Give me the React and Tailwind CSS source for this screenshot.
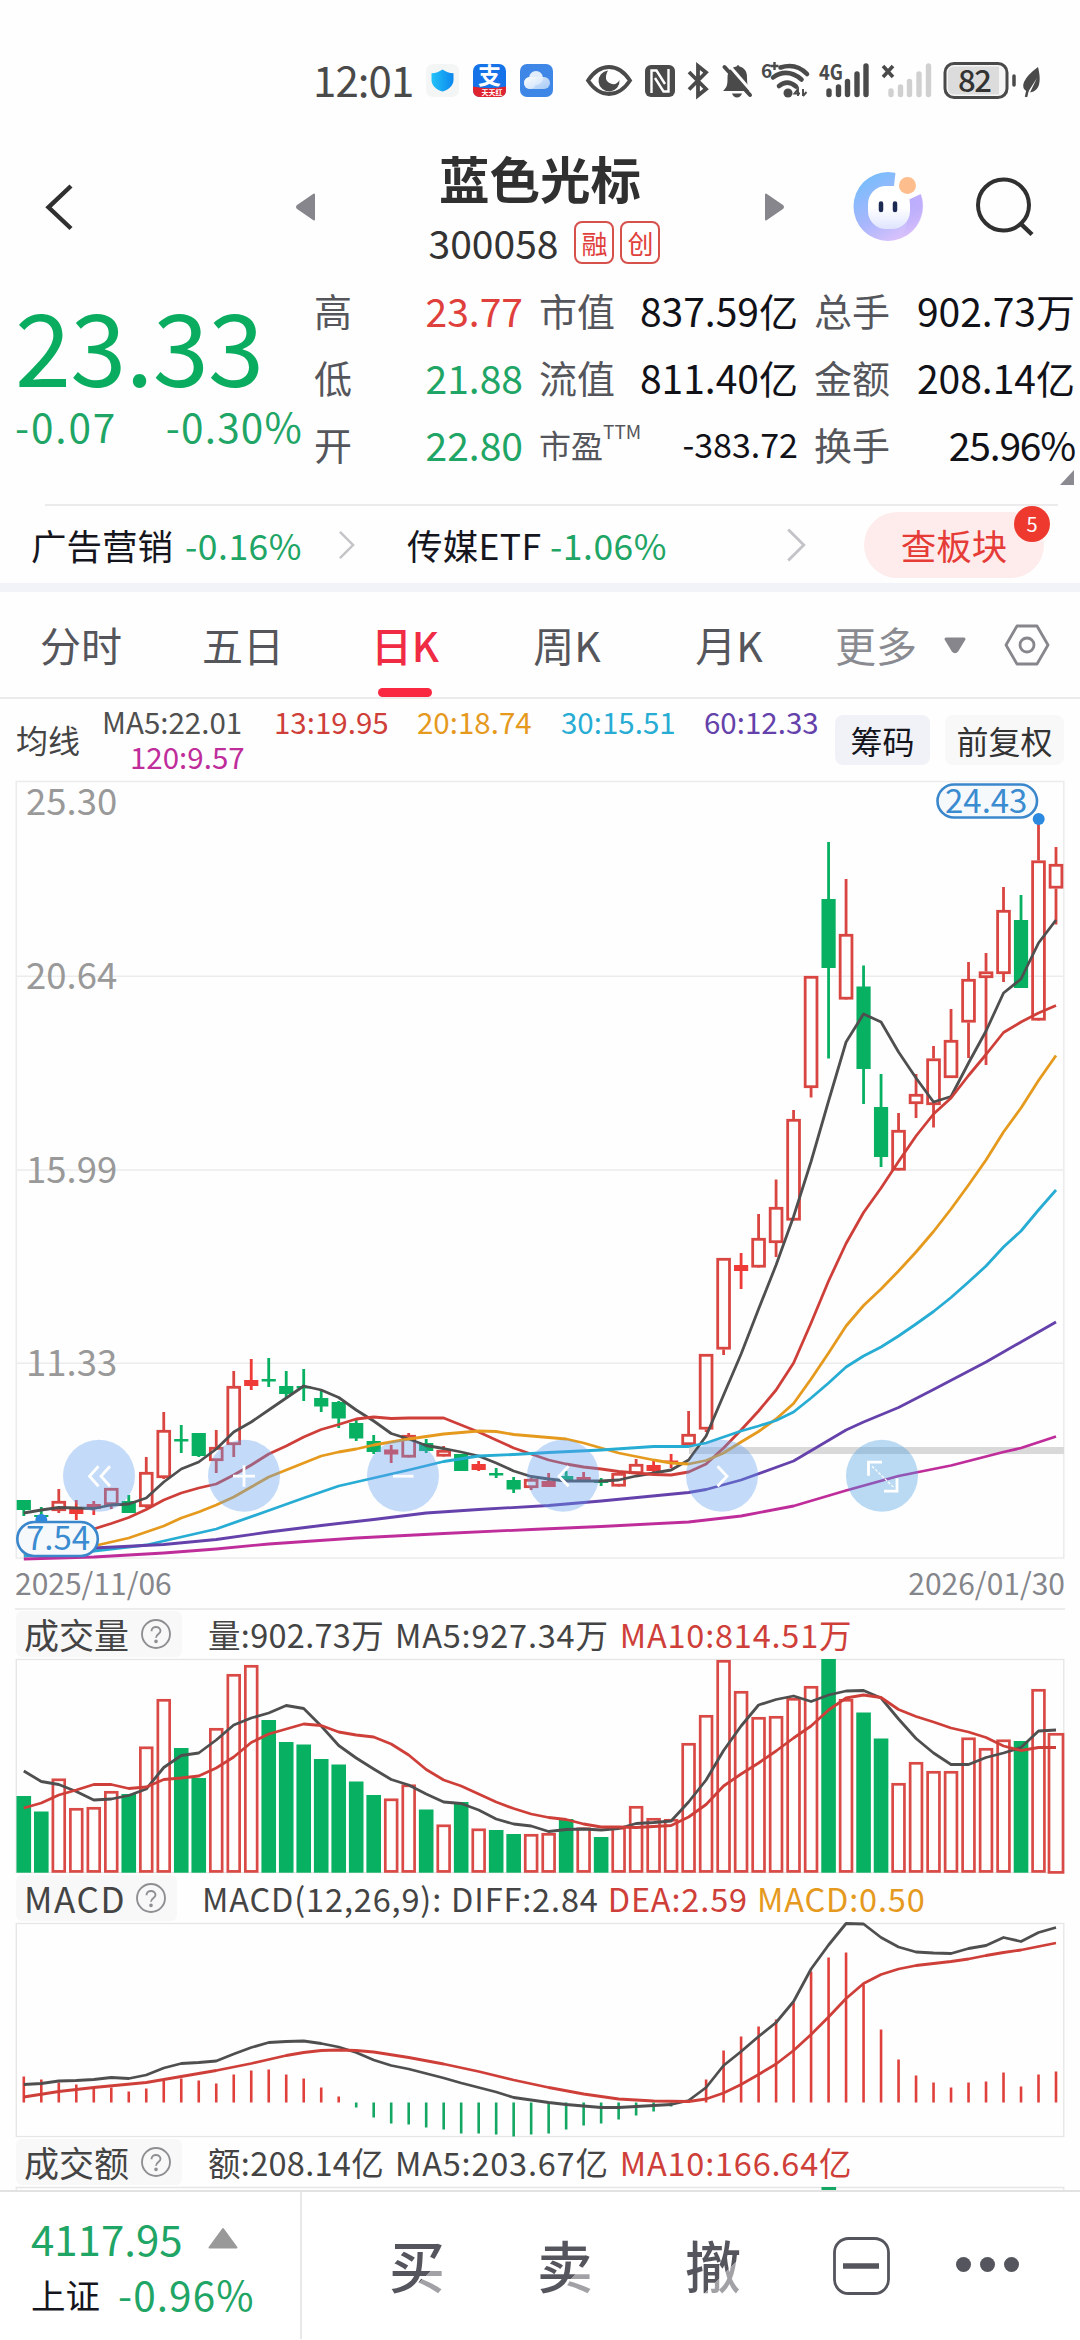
import React from 'react';

// One entry per trading day: [up, open/close top, open/close bottom, high, low], in chart units
const candles = [
  [0, 1501, 1511, 1501, 1517], [0, 1516, 1518, 1508, 1521], [1, 1502, 1512, 1490, 1514], [1, 1509, 1515, 1501, 1521],
  [1, 1505, 1510, 1502, 1516], [1, 1489, 1506, 1489, 1510], [0, 1502, 1514, 1496, 1514], [1, 1473, 1508, 1458, 1509],
  [1, 1431, 1479, 1413, 1480], [0, 1440, 1442.5, 1426, 1454], [0, 1434, 1457, 1434, 1458], [1, 1448, 1462, 1431, 1474],
  [1, 1387, 1446, 1372, 1458], [1, 1381, 1387, 1360, 1391], [0, 1380, 1382.5, 1359, 1388], [0, 1387, 1395, 1372, 1398],
  [0, 1387, 1389.5, 1370, 1402], [0, 1399, 1407.5, 1392, 1413], [0, 1403, 1419.5, 1402, 1429], [0, 1424, 1439.5, 1421, 1442],
  [0, 1442, 1453, 1436, 1455], [1, 1450.5, 1455.5, 1446, 1464], [1, 1436, 1458.5, 1434, 1458], [0, 1444, 1452, 1440, 1454],
  [1, 1451, 1457.5, 1447, 1457], [0, 1455, 1472, 1455, 1472], [1, 1465, 1471, 1462, 1472], [0, 1474, 1476.5, 1469, 1479],
  [0, 1481, 1490.5, 1478, 1494], [1, 1480, 1489, 1479, 1491], [1, 1482, 1488, 1474, 1488], [0, 1477, 1481, 1472, 1481],
  [1, 1478, 1482, 1473, 1482], [0, 1481.5, 1484, 1479, 1487], [1, 1474, 1487.5, 1472, 1487], [1, 1465, 1475, 1460, 1475],
  [1, 1466, 1472, 1460, 1474], [1, 1461.5, 1464, 1455, 1469], [1, 1435, 1446, 1412, 1446], [1, 1355, 1430.5, 1355, 1433],
  [1, 1259, 1350.5, 1259, 1356], [1, 1266, 1272, 1254, 1290], [1, 1239, 1268.5, 1215, 1268], [1, 1208, 1244, 1180.5, 1258],
  [1, 1120, 1221.5, 1111, 1221], [1, 977, 1089, 977, 1098.5], [0, 900, 969, 843, 1059.5], [1, 935, 1000.5, 880, 1000],
  [0, 987.5, 1070, 966.5, 1105], [0, 1108, 1158, 1075, 1168], [1, 1131, 1171.5, 1114, 1171], [1, 1095, 1105, 1075, 1119],
  [1, 1059.5, 1106, 1047, 1128.5], [1, 1041, 1079, 1010, 1078], [1, 980, 1023.5, 963, 1059], [1, 972.5, 979, 954, 1066],
  [1, 911, 975, 888, 983], [0, 921, 989, 896, 989], [1, 861.5, 1021.5, 825, 1021], [1, 865, 889.5, 848, 925.5],
];

const series = (...values) => values.map((y, i) => [i, y]);

const priceLines = [
  {
    color: '#4f4f4f',
    points: series(
      1514, 1511, 1508.5, 1509, 1509.5, 1506, 1505, 1499, 1483, 1470, 1463, 1450, 1433, 1423, 1411, 1399, 1387, 1391, 1398.5, 1411,
      1422, 1434.5, 1440, 1446.5, 1449.5, 1453, 1457, 1464, 1472, 1477.5, 1480, 1482, 1482, 1482, 1481, 1477, 1474, 1471, 1461, 1437,
      1396, 1355, 1310, 1266, 1217.5, 1162.5, 1102, 1043, 1015, 1023, 1053, 1079, 1103, 1097.5, 1064, 1032, 994, 980, 944, 921,
    ),
  },
  {
    color: '#cf3f39',
    points: series(
      1545, 1541, 1538, 1534, 1530, 1524.5, 1518.5, 1510.5, 1501, 1494, 1489, 1485, 1476, 1466, 1455, 1447, 1438, 1430.5, 1425.5, 1420,
      1418, 1419.5, 1419, 1419, 1419, 1426, 1433, 1441, 1449, 1455, 1461, 1465, 1468, 1470, 1472.5, 1474, 1475.5, 1476, 1473, 1465,
      1449, 1431, 1412, 1391, 1364, 1324, 1282, 1244.5, 1213.5, 1189, 1162.5, 1137, 1115, 1099, 1076.5, 1055.5, 1033.5, 1023, 1014, 1006.5,
    ),
  },
  {
    color: '#e59a1e',
    points: [
      [0, 1556], [4, 1547], [6, 1539], [8, 1527], [9, 1519], [10, 1513], [11, 1506], [12, 1498], [13, 1488], [14, 1478], [15, 1471],
      [16, 1464], [17, 1457], [18, 1453], [19, 1450], [20, 1446], [21, 1443], [22, 1440], [24, 1435], [26, 1432], [27, 1432.5],
      [28, 1435.5], [30, 1438.5], [31, 1440], [32, 1444], [33, 1449], [34, 1454], [36, 1461], [37, 1464], [38, 1465], [39, 1461.5],
      [40, 1454], [41, 1443], [42, 1432.5], [43, 1420], [44, 1404.5], [45, 1380], [46, 1354], [47, 1327], [48, 1306.5], [49, 1290],
      [50, 1272], [51, 1253], [52, 1232.5], [53, 1210], [54, 1186], [55, 1161], [56, 1133], [57, 1109], [58, 1081.5], [59, 1056.5],
    ],
  },
  {
    color: '#27acd3',
    points: [
      [0, 1557], [4, 1552], [7, 1546], [9, 1538], [11, 1530], [14, 1511.5], [16, 1499], [18, 1487], [20, 1479], [22, 1471], [24, 1462.5],
      [26, 1457], [28, 1455.5], [30, 1453.5], [33, 1451], [36, 1447.5], [38, 1447.5], [39, 1444], [40, 1438], [41, 1432], [42, 1427],
      [43, 1421.5], [44, 1413], [45, 1399], [46, 1384], [47, 1368], [48, 1357], [49, 1348], [50, 1337], [51, 1325], [52, 1312.5],
      [53, 1298.5], [54, 1283], [55, 1267], [56, 1248], [57, 1232], [58, 1211], [59, 1191],
    ],
  },
  {
    color: '#6441ab',
    points: [
      [0, 1553], [4, 1549], [8, 1545.5], [11, 1540.5], [14, 1533], [17, 1526.5], [20, 1520.5], [23, 1514], [26, 1510.5], [30, 1506.5],
      [33, 1502], [38, 1493.5], [39, 1490.5], [41, 1481], [44, 1462], [47, 1431], [48, 1423], [50, 1408.5], [52, 1390.5], [55, 1363],
      [57, 1343], [59, 1323],
    ],
  },
  {
    color: '#bf2d9b',
    points: [
      [0, 1560], [4, 1558], [6, 1556], [8, 1554], [11, 1550], [14, 1545], [19, 1539], [24, 1534.5], [29, 1530.5], [33, 1527.5],
      [38, 1523], [39, 1521], [41, 1517], [44, 1507], [47, 1491.5], [50, 1477], [53, 1466.5], [56, 1453], [57, 1449], [59, 1437.5],
    ],
  },
];

const volumes = [
  1797, 1812.5, 1779.5, 1809, 1808, 1792, 1795, 1747.5, 1700, 1749, 1779, 1729, 1675, 1666, 1721, 1743, 1745.5, 1760, 1765.5, 1782.5,
  1796, 1799.5, 1785.5, 1810.5, 1825.5, 1803, 1829.5, 1831, 1835, 1835, 1834, 1820, 1828.5, 1838, 1828, 1807, 1819, 1820, 1744, 1716,
  1661, 1692, 1718, 1717, 1699, 1687, 1660, 1700, 1713.5, 1739.5, 1784, 1763, 1772, 1772, 1738.5, 1749, 1740.5, 1742, 1690, 1734,
];

const volumeLines = [
  {
    color: '#4f4f4f',
    points: series(
      1772, 1782.5, 1785.5, 1792.5, 1801, 1800, 1796.5, 1790, 1768.5, 1756.5, 1754, 1741, 1726, 1719, 1714, 1706.5, 1709.5, 1727, 1746.5, 1759,
      1770, 1780.5, 1786, 1795, 1803, 1804.5, 1811, 1820, 1825, 1827, 1832.5, 1830.5, 1830, 1831, 1829.5, 1824.5, 1823.5, 1822, 1803, 1781,
      1751.5, 1727, 1706, 1700.5, 1697, 1702.5, 1696, 1692, 1691.5, 1699, 1720, 1739.5, 1754, 1765.5, 1765.5, 1758.5, 1754, 1748.5, 1732, 1731,
    ),
  },
  {
    color: '#cf3f39',
    points: series(
      1809, 1804, 1796, 1791, 1785.5, 1785.5, 1789.5, 1788, 1780.5, 1779, 1777, 1769, 1758, 1743.5, 1735, 1730, 1725, 1726.5, 1733, 1736,
      1738, 1745, 1756, 1770.5, 1781, 1787, 1795, 1803, 1809.5, 1815, 1818.5, 1820.5, 1825, 1828, 1828, 1828.5, 1827.5, 1826.5, 1818, 1805.5,
      1787, 1775, 1764, 1752, 1739, 1727, 1711, 1699, 1696, 1698.5, 1710.5, 1717.5, 1723, 1729, 1733, 1738.5, 1747, 1751.5, 1748.5, 1748.5,
    ),
  },
];

const MACD_ZERO = 2103.5;

// Signed histogram heights
const macdBars = [
  26, 23, 20, 18, 15, 15, 11, 14, 22, 24, 22, 19, 28, 32, 33, 28, 24, 15, 6, -5,
  -15, -21, -22, -25, -27, -31, -31, -32, -34, -32, -31, -27, -23, -21, -17, -13, -9, -4, 1, 23,
  52, 66, 76, 83, 100, 131, 145, 150, 118, 73, 43, 27, 20, 15, 20, 21, 30, 16, 28, 31,
];

const macdLines = [
  {
    color: '#4f4f4f',
    points: series(
      2085.5, 2084.5, 2082, 2081.5, 2080.5, 2078.5, 2079.5, 2076, 2069, 2064.5, 2063.5, 2062, 2055, 2048.5, 2043.5, 2042.5, 2042, 2044.5, 2048, 2053.5,
      2061, 2066.5, 2070, 2074.5, 2079, 2084, 2088.5, 2093, 2098.5, 2101, 2103.5, 2105.5, 2107, 2108.5, 2108.5, 2107.5, 2106.5, 2105.5, 2101.5, 2088.5,
      2066.5, 2052.5, 2037.5, 2023.5, 2002.5, 1970, 1946, 1924.5, 1925, 1938.5, 1948, 1953, 1954, 1954.5, 1949.5, 1946.5, 1938.5, 1942.5, 1933.5, 1928.5,
    ),
  },
  {
    color: '#cf3f39',
    points: [
      [0, 2098], [2, 2092.5], [4, 2088.5], [7, 2083.5], [9, 2077.5], [11, 2071.5], [13, 2064.5], [14, 2060.5], [15, 2056.5], [16, 2053.5],
      [17, 2051.5], [18, 2051], [19, 2051.5], [20, 2053], [22, 2058.5], [24, 2065], [26, 2072.5], [28, 2081], [30, 2088.5], [32, 2095],
      [34, 2100], [36, 2102], [38, 2102.5], [39, 2100], [40, 2094], [41, 2085.5], [42, 2075.5], [43, 2065], [44, 2051.5], [45, 2035.5],
      [46, 2018], [47, 1999.5], [48, 1984.5], [49, 1975.5], [50, 1970], [51, 1966.5], [52, 1964.5], [53, 1962.5], [54, 1960],
      [55, 1956.5], [56, 1953.5], [57, 1951], [58, 1947.5], [59, 1944],
    ],
  },
];

const xAt = (i) => 23.8 + i * 17.495;

const Lines = ({ lines }) => (
  <g fill="none" strokeWidth="2.8" strokeLinejoin="round">
    {lines.map((line, n) => (
      <polyline key={n} stroke={line.color} points={line.points.map(([i, y]) => `${xAt(i)},${y}`).join(' ')} />
    ))}
  </g>
);

const Candle = ({ index, data }) => {
  const [up, top, bottom, high, low] = data;
  const x = xAt(index);
  if (up && bottom - top > 6.2) {
    return (
      <g stroke="#d94642" strokeWidth="2.8" fill="none">
        <path d={`M${x} ${high}V${top}M${x} ${bottom}V${low}`} />
        <rect x={x - 5.9} y={top + 1.3} width="11.8" height={bottom - top - 2.6} />
      </g>
    );
  }
  return (
    <g fill={up ? '#ee3b38' : '#08b062'}>
      <rect x={x - 1.4} y={high} width="2.8" height={low - high} />
      <rect x={x - 7.1} y={top} width="14.2" height={bottom - top} />
    </g>
  );
};

const RoundButton = ({ x, fill = '#5f9eee', children }) => (
  <g>
    <circle cx={x} cy="1476.7" r="36" fill={fill} fillOpacity="0.37" />
    <g transform={`translate(${x} 1476.7)`} stroke="#fff" strokeWidth="2.8" fill="none">
      {children}
    </g>
  </g>
);

const PriceChart = () => (
  <svg width="1080" height="778" viewBox="0 782 1080 778" className="block shrink-0 overflow-visible">
    <g stroke="#ececec" strokeWidth="1.5" fill="none">
      <rect x="16.3" y="782.5" width="1047.5" height="776.5" />
      <path d="M16 977.3H1064M16 1171H1064M16 1364.3H1064" />
    </g>
    <rect x="689" y="1448" width="375" height="7" fill="#d9d9d9" />
    <g fontSize="36.5" fill="#999">
      <text x="26" y="816">25.30</text>
      <text x="26" y="990">20.64</text>
      <text x="26" y="1183.5">15.99</text>
      <text x="26" y="1377">11.33</text>
    </g>
    {candles.map((c, i) => <Candle key={i} index={i} data={c} />)}
    <Lines lines={priceLines} />
    <circle cx="1038.7" cy="820" r="6" fill="#2b8ae0" />
    <rect x="937.5" y="785.5" width="99.5" height="33" rx="16.5" fill="#f5f9fc" stroke="#3b87cc" strokeWidth="2.6" />
    <text x="945" y="813.5" fontSize="33" fill="#3b8bd0">24.43</text>
    <circle cx="41.3" cy="1521" r="6" fill="#2b8ae0" />
    <rect x="17.3" y="1523" width="80.5" height="34" rx="17" fill="#f5f9fc" stroke="#3b87cc" strokeWidth="2.6" />
    <text x="26" y="1551" fontSize="33" fill="#3b8bd0">7.54</text>
    <RoundButton x={99}><path d="M-0.5 -9.5L-9.5 0.5L-0.5 10.5M11 -9.5L2 0.5L11 10.5" /></RoundButton>
    <RoundButton x={244}><path d="M-11 0.5H11M0 -10.5V11" /></RoundButton>
    <RoundButton x={403}><path d="M-10 0.5H10.5" /></RoundButton>
    <RoundButton x={563}><path d="M5.5 -9.5L-4 0.5L5.5 10.5" /></RoundButton>
    <RoundButton x={722}><path d="M-4.5 -9.5L5 0.5L-4.5 10.5" /></RoundButton>
    <RoundButton x={882} fill="#479de0">
      <path d="M-13.5 0V-13.5H0M2 15.5H15V2.5" />
      <path d="M-10 -9.5L12 12" strokeWidth="1.2" strokeDasharray="3 1.5" />
    </RoundButton>
  </svg>
);

const VolumeChart = () => (
  <svg width="1080" height="216" viewBox="0 1659 1080 216" className="block shrink-0 overflow-visible">
    <rect x="16.3" y="1660.5" width="1047.5" height="213" fill="none" stroke="#e6e6e6" strokeWidth="1.3" />
    {volumes.map((top, i) => {
      if (!candles[i][0]) {
        return <rect key={i} x={xAt(i) - 7.3} y={top} width="14.6" height={1873.7 - top} fill="#08b062" />;
      }
      const half = i === 59 ? 7 : 5.9;
      return (
        <rect key={i} x={xAt(i) - half} y={top + 1.3} width={half * 2} height={1872.4 - top - 1.3 + (i === 59 ? 1 : 0)}
          fill="none" stroke="#d94a46" strokeWidth="2.7" />
      );
    })}
    <Lines lines={volumeLines} />
  </svg>
);

const MacdChart = () => (
  <svg width="1080" height="215" viewBox="0 1923 1080 215" className="block shrink-0 overflow-visible">
    <rect x="16.3" y="1924.5" width="1047.5" height="213" fill="none" stroke="#e6e6e6" strokeWidth="1.3" />
    {macdBars.map((v, i) => (
      <rect key={i} x={xAt(i) - 1.3} y={v > 0 ? MACD_ZERO - v : MACD_ZERO} width="2.6" height={Math.abs(v)}
        fill={v > 0 ? '#e0403c' : '#14a663'} />
    ))}
    <Lines lines={macdLines} />
  </svg>
);

const HelpIcon = () => (
  <svg width="30" height="30" viewBox="0 0 30 30" fill="none" stroke="#8f8f93" strokeWidth="1.9">
    <circle cx="15" cy="15" r="14" />
    <path d="M10.5 12.2C10.5 6.6 19.5 6.6 19.5 12C19.5 15 15 15 15 18.8" />
    <circle cx="15" cy="22.3" r="0.9" />
  </svg>
);

const IndicatorRow = ({ label, className, children }) => (
  <div className="flex h-12 shrink-0 items-center pl-4">
    <div className={`flex h-[46px] items-center justify-between rounded-md bg-[#f8f8f8] pr-[11px] pl-2 text-[35px] text-[#444] ${className}`}>
      <span>{label}</span>
      <HelpIcon />
    </div>
    {children}
  </div>
);

const StatusBar = () => (
  <div className="flex h-[120px] shrink-0 pt-[58px] pl-[313px] text-[#4a4a4a]">
    <span className="w-[115px] text-[42px] leading-[42px] tracking-[-0.9px]">12:01</span>
    <svg width="630" height="54" viewBox="428 54 630 54" className="-mt-1 block overflow-visible">
      <defs>
        <linearGradient id="shield" x1="0" x2="1"><stop offset="0" stopColor="#23c3f8" /><stop offset="1" stopColor="#0b87ee" /></linearGradient>
        <linearGradient id="cloud" x1="0" x2="1" y1="0" y2="1"><stop offset="0" stopColor="#fff" /><stop offset="1" stopColor="#b9d6f8" /></linearGradient>
      </defs>
      {/* notification apps */}
      <rect x="426" y="64" width="33" height="33" rx="7" fill="#f4f5f5" />
      <path d="M442.5 69.5C446 72 449 73 453.5 73.3V80C453.5 85.5 449 89.5 442.5 91.5C436 89.5 431.5 85.5 431.5 80V73.3C436 73 439 72 442.5 69.5Z" fill="url(#shield)" />
      <rect x="473" y="64" width="33" height="33" rx="7" fill="#1672e8" />
      <text x="478" y="84" fontSize="23" fontWeight="700" fill="#fff">支</text>
      <path d="M473 86.5Q489 90 506 86.5V90Q506 97 499 97H480Q473 97 473 90Z" fill="#df2430" />
      <text x="481.5" y="94.5" fontSize="7" fontWeight="700" fill="#fff">天天红</text>
      <rect x="520" y="64" width="33" height="33" rx="7" fill="#3f87e6" />
      <circle cx="536" cy="78" r="7" fill="#fff" fillOpacity="0.85" />
      <circle cx="530" cy="83" r="6" fill="#e9f2fd" />
      <rect x="524" y="77" width="26" height="12" rx="6" fill="url(#cloud)" fillOpacity="0.85" />
      {/* eye comfort */}
      <path d="M588 80.5C595 70 602 67 609 67C616 67 623 70 630 80.5C623 91 616 94 609 94C602 94 595 91 588 80.5Z" fill="none" stroke="currentColor" strokeWidth="3.8" />
      <path d="M608 70.5A10.5 10.5 0 1 0 619.5 80Q617 85 612 84Q605 82 606 76Q606.5 73 608 70.5Z" fill="currentColor" />
      {/* nfc */}
      <rect x="645" y="65" width="30" height="32" rx="6" fill="currentColor" />
      <path d="M651.5 93V70.5L656.5 70.5L665 84M668.5 69V91.5L663.5 91.5L655 78" stroke="#fff" strokeWidth="2.4" fill="none" />
      {/* bluetooth */}
      <path d="M689 72L706 89L698 95.5V66L706 72.5L689 89.5" fill="none" stroke="currentColor" strokeWidth="3.8" />
      {/* muted bell */}
      <path d="M723 91C726 88 727.5 86 727.5 80V78C727.5 71 731 67.5 736.5 66.5Q738 63.5 739.5 66.5C744 67.5 747 71 747 77C747 85 748 88 751 91Z" fill="currentColor" />
      <path d="M727 63L753 93" stroke="#fefefe" strokeWidth="3" />
      <path d="M724.5 67L750 95" stroke="currentColor" strokeWidth="4" strokeLinecap="round" />
      <path d="M732 93.5H742Q740.5 97.5 737 97.5Q733.5 97.5 732 93.5Z" fill="currentColor" />
      {/* wifi */}
      <text x="761" y="78" fontSize="19" fontWeight="700" fill="currentColor">6</text>
      <path d="M770.500 66H778.500M774.500 62V70" stroke="currentColor" strokeWidth="2.4" />
      <g fill="none" stroke="currentColor" strokeWidth="4.6" strokeLinecap="round">
        <path d="M780.5 67.5Q796 62.5 807 74" />
        <path d="M773 77.5Q787 67.5 801.5 79.5" />
        <path d="M779 86Q787.5 79 796 86.5" />
      </g>
      <circle cx="788" cy="93" r="4.5" fill="currentColor" />
      <path d="M798 96V89L794.5 93.5H800M803 89V96M803 96L806.5 92" stroke="currentColor" strokeWidth="1.9" fill="none" />
      {/* signal */}
      <text x="819" y="80" fontSize="21" fontWeight="700" fill="currentColor" textLength="24" lengthAdjust="spacingAndGlyphs">4G</text>
      <g stroke="currentColor" strokeWidth="5.4" strokeLinecap="round">
        <path d="M829 91V94.5M838.5 87V94.5M847.5 81.5V94.5M857 74V94.5M866 66V94.5" />
      </g>
      <path d="M883 66L893 77M893 66L883 77" stroke="currentColor" strokeWidth="3.6" />
      <g stroke="#d0d0d0" strokeWidth="5.4" strokeLinecap="round">
        <path d="M891 91V94.5M900.5 87V94.5M909.5 81.5V94.5M919 74V94.5M928.5 66V94.5" />
      </g>
      {/* battery */}
      <rect x="945" y="63.5" width="62" height="34" rx="9" fill="#f5f5f5" stroke="currentColor" strokeWidth="3" />
      <path d="M954 66.5H999V94.5H954Q948 94.5 948 88V73Q948 66.5 954 66.5Z" fill="#dcdcdc" />
      <text x="958" y="92" fontSize="31" fontWeight="500" fill="#333" textLength="34">82</text>
      <path d="M1014 76V85" stroke="currentColor" strokeWidth="3.5" strokeLinecap="round" />
      <path d="M1038 67C1041 79 1041 91 1030 92.5L1037 78L1028 92Q1021 89 1024 82Q1027 75 1038 67Z" fill="currentColor" />
      <path d="M1029 84L1026 97" stroke="currentColor" strokeWidth="2.5" />
    </svg>
  </div>
);

const Header = () => (
  <div className="flex h-[155px] shrink-0 text-[#303030]">
    <svg width="330" height="155" viewBox="0 120 330 155" className="shrink-0">
      <path d="M71 186L48.5 207.3L71 228.5" fill="none" stroke="currentColor" strokeWidth="4.4" />
      <path d="M314 194.5V219.5L298 208.5Q296 207 298 205.5Z" fill="#86868c" stroke="#86868c" strokeWidth="2" strokeLinejoin="round" />
    </svg>
    <div className="flex w-[420px] flex-col items-center pt-[30px]">
      <h1 className="text-[50.5px] leading-[54px] font-bold">蓝色光标</h1>
      <div className="mt-[15px] flex items-center pl-[9px]">
        <span className="text-[39px] leading-[46px] text-[#333]">300058</span>
        <span className="ml-4 flex h-[43px] w-10 items-center justify-center rounded-lg border-2 border-[#d6504c] text-[26px] text-[#e0403c]">融</span>
        <span className="ml-[6px] flex h-[43px] w-10 items-center justify-center rounded-lg border-2 border-[#d6504c] text-[26px] text-[#e0403c]">创</span>
      </div>
    </div>
    <svg width="330" height="155" viewBox="750 120 330 155" className="shrink-0">
      <defs>
        <linearGradient id="ring" x1="0.2" y1="0" x2="0.8" y2="1">
          <stop offset="0" stopColor="#74bdfc" /><stop offset="0.55" stopColor="#a9b6fc" /><stop offset="1" stopColor="#e5c4fb" />
        </linearGradient>
        <linearGradient id="ringSide" x1="0" y1="0" x2="0" y2="1"><stop offset="0" stopColor="#c7aefd" /><stop offset="1" stopColor="#b79cfb" stopOpacity="0" /></linearGradient>
        <linearGradient id="face" x1="0" y1="0" x2="0" y2="1"><stop offset="0.5" stopColor="#fff" /><stop offset="1" stopColor="#dfe4ff" /></linearGradient>
      </defs>
      <path d="M766 194.5V219.5L782 208.5Q784 207 782 205.5Z" fill="#86868c" stroke="#86868c" strokeWidth="2" strokeLinejoin="round" />
      <circle cx="888" cy="206.5" r="34.5" fill="url(#ring)" />
      <path d="M914 183A34.5 34.5 0 0 1 900 239Q912 220 908 195Z" fill="url(#ringSide)" />
      <rect x="868" y="186" width="42" height="43" rx="18" fill="url(#face)" />
      <path d="M896 168L922 172L925 192L908 200L894 186Z" fill="#fefefe" />
      <rect x="880" y="186" width="28" height="20" rx="10" fill="#fff" />
      <circle cx="907.5" cy="185.5" r="8.5" fill="#fdbd8c" />
      <path d="M881 203.5V210M895 203.5V210" stroke="#1d2a52" strokeWidth="4.5" strokeLinecap="round" />
      <circle cx="1003.5" cy="205" r="25.5" fill="none" stroke="currentColor" strokeWidth="4" />
      <path d="M1020 223L1032 234.5" stroke="currentColor" strokeWidth="4.5" />
    </svg>
  </div>
);

const stats = [
  [['高', '23.77', 'text-[#e0403c]'], ['市值', '837.59亿'], ['总手', '902.73万']],
  [['低', '21.88', 'text-[#1fa565]'], ['流值', '811.40亿'], ['金额', '208.14亿']],
  [['开', '22.80', 'text-[#1fa565]'], ['市盈', '-383.72'], ['换手', '25.96%']],
];

const widths = ['w-[209px]', 'w-[259px]', 'w-[261px]'];
const gaps = ['', 'ml-[16px]', 'ml-[16px]'];

const valueSize = (value) => {
  if (value === '-383.72') return 'text-[34px]';
  return value.endsWith('%') ? 'text-[39px] tracking-[-1.2px]' : 'text-[39px]';
};

const Quote = () => (
  <div className="relative flex h-[229px] shrink-0">
    <div className="w-[314px] shrink-0 pl-[15px] text-[#0aad60]">
      <div className="mt-[8px] text-[101px] leading-[120px] tracking-[-0.8px]">23.33</div>
      <div className="mt-[-4px] flex justify-between pr-[11px] text-[40.5px] leading-[54px] tracking-[1.2px] text-[#1fa565]">
        <span className="tracking-[1.9px]">-0.07</span>
        <span>-0.30%</span>
      </div>
    </div>
    <div className="flex flex-col pt-[1px]">
      {stats.map((row, r) => (
        <div key={r} className="flex h-[67.3px] items-center">
          {row.map(([label, value, color], c) => (
            <div key={label} className={`flex items-center justify-between ${widths[c]} ${gaps[c]}`}>
              {label === '市盈' ? (
                <span className="flex text-[32px] leading-[44px] text-[#55565c]">
                  {label}<span className="-mt-[5px] text-[19px] leading-[28px]">TTM</span>
                </span>
              ) : (
                <span className="text-[38px] leading-[56px] text-[#55565c]">{label}</span>
              )}
              <span className={`leading-[56px] ${valueSize(value)} ${color || 'text-[#111118]'}`}>{value}</span>
            </div>
          ))}
        </div>
      ))}
    </div>
    <svg width="14" height="15" className="absolute right-[6px] bottom-[19px]"><path d="M14 0V15H0Z" fill="#8a8a90" /></svg>
  </div>
);

const Arrow = ({ className }) => (
  <svg viewBox="0 0 18 32" className={className} fill="none" stroke="#c4c4c8" strokeWidth="2.6"><path d="M2 2L16 16L2 30" /></svg>
);

const SectorRow = () => (
  <div className="flex h-[79px] shrink-0 flex-col">
    <div className="mr-[22px] ml-[45px] h-[2px] bg-[#ebebeb]" />
    <div className="flex flex-1 items-center pl-[31px] text-[35.5px] text-[#15151d]">
      <span>广告营销</span>
      <span className="ml-[12px] w-[120px] tracking-[0.5px] text-[#1fa565]">-0.16%</span>
      <Arrow className="ml-[33px] h-[30px] w-[17px]" />
      <span className="ml-[52px] w-[137px] tracking-[0.3px] whitespace-nowrap">传媒ETF</span>
      <span className="ml-[6px] w-[120px] tracking-[0.5px] text-[#1fa565]">-1.06%</span>
      <Arrow className="ml-[116px] h-[36px] w-[20px]" />
      <div className="relative ml-[58px] flex h-[66px] w-[180px] shrink-0 items-center justify-center rounded-full bg-[#fdeceb] text-[#e63c38]">
        查板块
        <span className="absolute -top-[6px] right-[-6px] flex h-9 w-9 items-center justify-center rounded-full bg-[#ee3a2e] text-[20px] text-white">5</span>
      </div>
    </div>
  </div>
);

const Tabs = () => (
  <div className="flex h-[107px] shrink-0 items-stretch border-b-2 border-[#ebebeb] text-[41px] text-[#55565c]">
    {['分时', '五日', '日K', '周K', '月K'].map((tab) => (
      <div key={tab} className={`relative flex w-[162px] items-center justify-center ${tab === '日K' ? 'font-medium text-[#f02c45]' : ''}`}>
        {tab}
        {tab === '日K' && <span className="absolute bottom-0 h-[9px] w-[54px] rounded-md bg-[#fb2842]" />}
      </div>
    ))}
    <div className="flex flex-1 items-center pl-[25px] text-[#8a8b91]">
      更多
      <svg width="24" height="18" viewBox="0 0 24 18" className="ml-[26px]"><path d="M3 3H21L14 14.5Q12 17 10 14.5Z" fill="#86868c" stroke="#86868c" strokeWidth="3" strokeLinejoin="round" /></svg>
      <svg width="46" height="42" viewBox="0 0 46 42" className="ml-[37px]" fill="none" stroke="#86868c" strokeWidth="2.8" strokeLinejoin="round">
        <path d="M13 2H33L44 21L33 40H13L2 21Z" />
        <circle cx="23" cy="21" r="7" />
      </svg>
    </div>
  </div>
);

const averages = [
  ['MA5:22.01', 'w-[172px] text-[#4f4f4f]'],
  ['13:19.95', 'w-[143px] text-[#cf3f39]'],
  ['20:18.74', 'w-[144px] text-[#e59a1e]'],
  ['30:15.51', 'w-[143px] text-[#27acd3]'],
  ['60:12.33', 'text-[#6441ab]'],
];

const Averages = () => (
  <div className="flex h-[82px] shrink-0 pl-[16px]">
    <span className="w-[86px] pt-4 text-[32px] leading-[48px] text-[#444]">均线</span>
    <div className="w-[733px] pt-[5px] text-[29.5px] leading-[35px]">
      <div className="flex">
        {averages.map(([text, cls]) => <span key={text} className={cls}>{text}</span>)}
      </div>
      <div className="pl-[28px] text-[#bf2d9b]">120:9.57</div>
    </div>
    <div className="mt-[16px] flex h-[50px] w-[95px] items-center justify-center rounded-lg bg-[#f1f2f7] text-[32px] text-[#15151d]">筹码</div>
    <div className="mt-[16px] ml-[15px] flex h-[50px] w-[119px] items-center justify-center rounded-lg bg-[#f8f8f8] text-[32px] text-[#333]">前复权</div>
  </div>
);

const Footer = () => (
  <div className="z-10 flex h-[149px] shrink-0 border-t-2 border-[#e2e2e2] bg-white text-[#1fa565]">
    <div className="flex w-[302px] flex-col border-r-2 border-[#e8e8e8] pt-[18px] pl-[31px]">
      <div className="flex items-center text-[42px] leading-[56px]">
        4117.95
        <svg width="32" height="22" viewBox="0 0 32 22" className="ml-[24px]"><path d="M16 2L29.5 20.5H2.5Z" fill="#999" stroke="#999" strokeWidth="2" strokeLinejoin="round" /></svg>
      </div>
      <div className="flex items-center text-[40.5px] leading-[56px]">
        <span className="text-[34.5px] text-[#15151d]">上证</span>
        <span className="ml-[18px] tracking-[1.1px]">-0.96%</span>
      </div>
    </div>
    {['买', '卖', '撤'].map((action, i) => (
      <span key={action} className={`${i === 0 ? 'ml-[87px]' : 'ml-[92px]'} box-content h-[80px] w-14 bg-linear-[135deg,#54555d_72%,#a2a2a6_72%] bg-clip-text pt-[32px] text-[56px] leading-[80px] font-medium text-transparent`}>
        {action}
      </span>
    ))}
    <svg width="200" height="60" viewBox="833 2237 200 60" className="mt-[44px] ml-[92px]">
      <rect x="834.5" y="2239.5" width="54" height="55" rx="14" fill="none" stroke="#54555d" strokeWidth="2.8" />
      <path d="M843 2267H879" stroke="#54555d" strokeWidth="5.5" />
      <g fill="#54555d"><circle cx="963.5" cy="2265.5" r="7.5" /><circle cx="987.5" cy="2265.5" r="7.5" /><circle cx="1011.5" cy="2265.5" r="7.5" /></g>
    </svg>
  </div>
);

export default function App() {
  return (
    <div className="flex h-[2340px] w-[1080px] flex-col overflow-hidden bg-[#fefefe] font-['Noto_Sans_CJK_SC',sans-serif]">
      <StatusBar />
      <Header />
      <Quote />
      <SectorRow />
      <div className="h-[9px] shrink-0 bg-[#f1f3f8]" />
      <Tabs />
      <Averages />
      <PriceChart />
      <div className="flex h-[49px] shrink-0 justify-between px-[15px] pt-[3px] text-[30px] leading-[40px] text-[#85868b]">
        <span>2025/11/06</span>
        <span>2026/01/30</span>
      </div>
      <div className="mx-[15px] h-[2px] shrink-0 bg-[#ececec]" />
      <IndicatorRow label="成交量" className="w-[166px]">
        <div className="ml-[26px] flex gap-[11px] text-[32.5px] text-[#444]">
          <span className="tracking-[0.3px]">量:902.73万</span>
          <span className="tracking-[0.8px]">MA5:927.34万</span>
          <span className="tracking-[0.8px] text-[#cf3f39]">MA10:814.51万</span>
        </div>
      </IndicatorRow>
      <VolumeChart />
      <IndicatorRow label={<span className="tracking-[1.6px]">MACD</span>} className="w-[161px]">
        <div className="ml-[25px] flex gap-[9px] text-[32.5px] tracking-[0.85px] text-[#444]">
          <span>MACD(12,26,9):</span>
          <span>DIFF:2.84</span>
          <span className="text-[#cf3f39]">DEA:2.59</span>
          <span className="text-[#e59a1e]">MACD:0.50</span>
        </div>
      </IndicatorRow>
      <MacdChart />
      <div className="h-px shrink-0" />
      <IndicatorRow label="成交额" className="w-[166px]">
        <div className="ml-[26px] flex gap-[11px] text-[32.5px] text-[#444]">
          <span className="tracking-[0.3px]">额:208.14亿</span>
          <span className="tracking-[0.8px]">MA5:203.67亿</span>
          <span className="tracking-[0.8px] text-[#cf3f39]">MA10:166.64亿</span>
        </div>
      </IndicatorRow>
      <svg width="1080" height="4" className="block shrink-0">
        <path d="M16.3 5V1.5H1063.8V5" fill="none" stroke="#e6e6e6" strokeWidth="1.3" />
        <rect x="821.5" y="1" width="14.6" height="3" fill="#14a663" />
      </svg>
      <Footer />
    </div>
  );
}
